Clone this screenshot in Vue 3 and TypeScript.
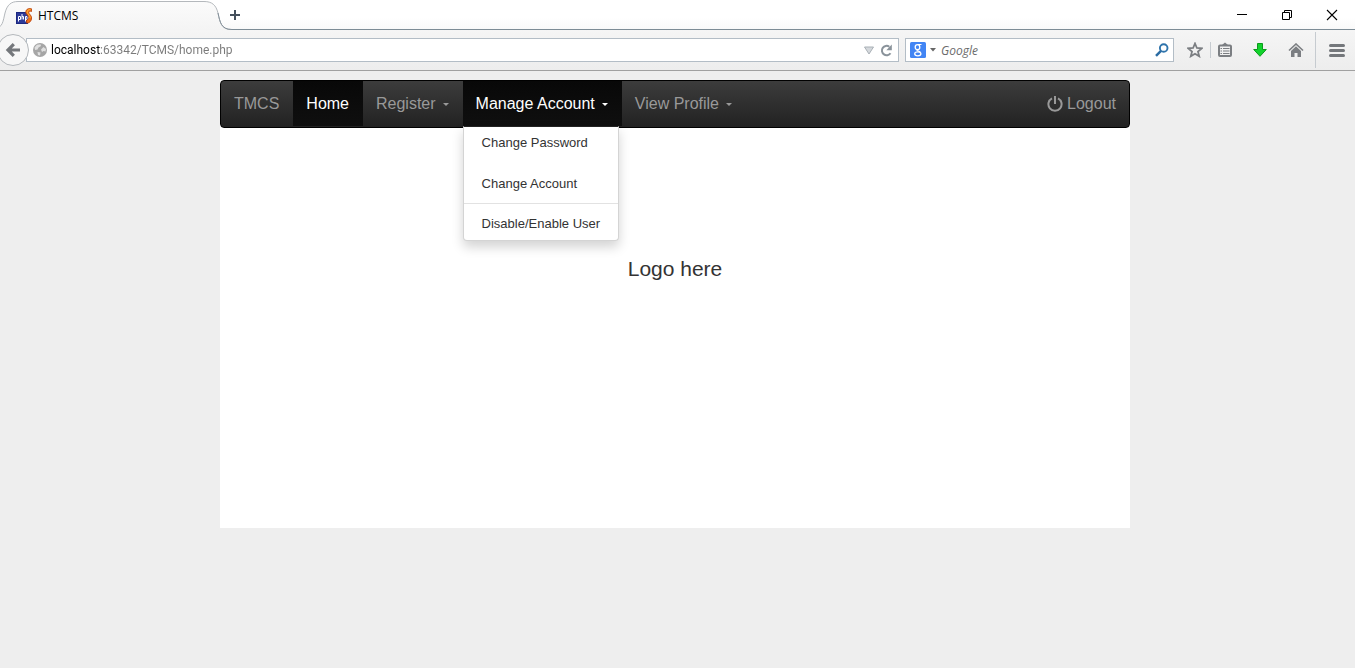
<script setup lang="ts">
import { ref } from 'vue'

interface MenuEntry {
  label: string
  divided?: boolean
}
interface NavItem {
  label: string
  menu?: MenuEntry[]
}

const address = ref('localhost:63342/TCMS/home.php')
const query = ref('')
const openMenu = ref('Manage Account')

const navItems: NavItem[] = [
  { label: 'Home' },
  { label: 'Register', menu: [] },
  {
    label: 'Manage Account',
    menu: [
      { label: 'Change Password' },
      { label: 'Change Account' },
      { label: 'Disable/Enable User', divided: true },
    ],
  },
  { label: 'View Profile', menu: [] },
]

function toggle(item: NavItem) {
  if (item.menu) openMenu.value = openMenu.value === item.label ? '' : item.label
}
</script>

<template>
  <div class="browser">
    <header class="tabstrip">
      <div class="tab">
        <svg class="tab-shape" width="232" height="30" viewBox="0 0 232 30" aria-hidden="true">
          <defs>
            <linearGradient id="tabFill" x1="0" y1="0" x2="0" y2="1">
              <stop offset="0" stop-color="#fbfbfb" />
              <stop offset="1" stop-color="#f4f4f4" />
            </linearGradient>
          </defs>
          <path d="M-6 30C3 29 3 21 5 13C7 5 11 1.500 18 1.500H204C212 1.500 216 5 218 13C220 22 221 29.500 231 29.500V30Z" fill="url(#tabFill)" />
          <path d="M-6 29C3 28 3 21 5 13C7 5 11 1.500 18 1.500H204C212 1.500 216 5 218 13C220 22 221 29.500 231 29.500" fill="none" stroke="#b4b8bc" />
          <path d="M218 13C220 22 221 29.500 232 29.500" fill="none" stroke="#83909a" />
        </svg>
        <svg class="favicon" width="16" height="16" viewBox="0 0 16 16" aria-hidden="true">
          <rect x="0.500" y="4.500" width="11" height="11" fill="#2c3a98" stroke="#1c2880" />
          <path d="M2.500 13.500V8.500H4.500V11.500H2.500M6 6V11.500M6 8.500H7.500V11.500M9.500 13.500V8.500H11V11.500H9.500" fill="none" stroke="#fff" />
          <path d="M15.500 0.800C12 0 9.500 1.800 9.800 4.500C10 6.500 12.700 7.500 12.700 9.500C12.700 11 12 12 10.500 12V15C13.500 15.300 15.600 13 15.600 10C15.600 7 12.800 6.300 12.800 4.500C12.800 3.300 14 3 15.500 3.500Z" fill="#f07018" stroke="#b83c08" stroke-width="0.800" />
          <path d="M14.500 1.600C12.300 1.500 11 2.600 11.200 4.300C11.400 6 14.200 7.500 14.200 10" fill="none" stroke="#ffc23d" stroke-width="0.900" />
        </svg>
        <span>HTCMS</span>
      </div>
      <button class="plain new-tab" aria-label="New tab">
        <svg width="12" height="12" viewBox="0 0 12 12"><path d="M6 1V11M1 6H11" stroke="#45505c" stroke-width="2" /></svg>
      </button>
      <div class="window-controls">
        <button class="plain" aria-label="Minimize">
          <svg width="12" height="12" viewBox="0 0 12 12"><path d="M1 5.500H11" stroke="#000" /></svg>
        </button>
        <button class="plain" aria-label="Restore">
          <svg width="12" height="12" viewBox="0 0 12 12"><path d="M1.500 3.500H8.500V10.500H1.500ZM3.500 3V1.500H10.500V8.500H9" fill="none" stroke="#000" /></svg>
        </button>
        <button class="plain close" aria-label="Close">
          <svg width="12" height="12" viewBox="0 0 12 12"><path d="M1 1L11 11M11 1L1 11" stroke="#000" stroke-width="1.100" /></svg>
        </button>
      </div>
    </header>

    <div class="toolbar">
      <button class="back" aria-label="Back">
        <svg width="16" height="16" viewBox="0 0 16 16"><path d="M8.800 2.200L3 8L8.800 13.800M3.500 8H15" fill="none" stroke="#74777b" stroke-width="3.200" /></svg>
      </button>
      <div class="field url">
        <svg width="14" height="14" viewBox="0 0 14 14" aria-hidden="true">
          <circle cx="7" cy="7" r="7" fill="#a6a6a6" />
          <path d="M1.500 4.500L4 1.800L7.500 1.200L8 3L5.500 4.500L4.500 6.500L2 7ZM8 6.500L10.500 4L13 6L12.500 8.500L10.500 8L9 9ZM4.500 9L7.500 9.500L7 12.500L5 12Z" fill="#e0e0e0" />
        </svg>
        <input v-model="address" class="address" type="text" aria-label="Address" spellcheck="false" />
        <button class="plain" aria-label="Show history">
          <svg width="10" height="9" viewBox="0 0 10 9"><path d="M0.500 1H9.500L5 8Z" fill="#d4d8dc" stroke="#a9b0b6" /></svg>
        </button>
        <button class="plain" aria-label="Reload">
          <svg width="13" height="13" viewBox="0 0 13 13"><path d="M10.500 9.200A4.700 4.700 0 1 1 9.300 2.700" fill="none" stroke="#8a939b" stroke-width="2" /><path d="M11.800 0.500V6.200H6.300Z" fill="#8a939b" /></svg>
        </button>
      </div>
      <div class="field search">
        <button class="plain engine" aria-label="Choose search engine">
          <svg width="16" height="16" viewBox="0 0 16 16">
            <rect width="16" height="16" rx="1.500" fill="#4285f4" />
            <ellipse cx="7.500" cy="5.200" rx="2.300" ry="2.500" fill="none" stroke="#fff" stroke-width="1.300" />
            <ellipse cx="7.800" cy="11.800" rx="3.100" ry="2" fill="none" stroke="#fff" stroke-width="1.300" />
            <path d="M8 2.500H11.500M7 7.700C6.500 9 9.500 8.800 10.500 10.500" fill="none" stroke="#fff" stroke-width="1.200" />
          </svg>
          <svg width="6" height="4" viewBox="0 0 6 4"><path d="M0 0H6L3 3.500Z" fill="#666" /></svg>
        </button>
        <input v-model="query" type="text" aria-label="Search" placeholder="Google" />
        <button class="plain" aria-label="Go">
          <svg width="14" height="14" viewBox="0 0 14 14"><circle cx="8.700" cy="5" r="3.800" fill="none" stroke="#2f74ac" stroke-width="1.900" /><path d="M6 7.800L1 12.800" stroke="#2b6ca3" stroke-width="2.500" /></svg>
        </button>
      </div>
      <div class="actions">
        <button class="plain star" aria-label="Bookmark this page">
          <svg width="16" height="16" viewBox="0 0 16 16"><path d="M8 1.500L9.900 6L14.700 6.400L11 9.600L12.200 14.300L8 11.800L3.800 14.300L5 9.600L1.300 6.400L6.100 6Z" fill="none" stroke="#7b7e82" stroke-width="1.800" /></svg>
        </button>
        <span class="rule short"></span>
        <button class="plain list" aria-label="Show bookmarks">
          <svg width="14" height="16" viewBox="0 0 14 16"><path d="M4 3L7 0.500L10 3Z" fill="#7b7e82" /><rect x="1" y="3.500" width="12" height="10.500" rx="1" fill="#f1f1f1" stroke="#7b7e82" stroke-width="2" /><path d="M2.500 6.500H4M5 6.500H11.500M2.500 9H4M5 9H11.500M2.500 11.500H4M5 11.500H11.500" stroke="#7b7e82" stroke-width="1.100" /></svg>
        </button>
        <button class="plain down" aria-label="Downloads">
          <svg width="14" height="14" viewBox="0 0 14 14"><path d="M4.500 0.500H9.500V6.500H13.300L7 13.300L0.700 6.500H4.500Z" fill="#12d32c" stroke="#0b9a1c" /></svg>
        </button>
        <button class="plain home" aria-label="Home page">
          <svg width="16" height="14" viewBox="0 0 16 14"><path d="M1 7.500L8 1L15 7.500" fill="none" stroke="#7b7e82" stroke-width="1.600" /><path d="M3 8L8 3.300L13 8V14H9.500V10H6.500V14H3Z" fill="#7b7e82" /></svg>
        </button>
        <span class="rule"></span>
        <button class="plain menu-button" aria-label="Open menu">
          <svg width="16" height="13" viewBox="0 0 16 13"><path d="M1.500 1.500H14.500M1.500 6.500H14.500M1.500 11.500H14.500" stroke="#74777b" stroke-width="3" stroke-linecap="round" /></svg>
        </button>
      </div>
    </div>

    <div class="viewport">
      <div class="container">
        <nav class="navbar">
          <a class="nav-link" href="#">TMCS</a>
          <ul class="nav-list">
            <li v-for="item in navItems" :key="item.label" class="nav-item">
              <a
                class="nav-link"
                :class="{ active: item.label === 'Home' || item.label === openMenu }"
                href="#"
                @click.prevent="toggle(item)"
              >{{ item.label }}<span v-if="item.menu" class="caret"></span></a>
              <ul v-if="item.menu && item.menu.length && openMenu === item.label" class="dropdown">
                <li v-for="entry in item.menu" :key="entry.label" :class="{ divided: entry.divided }">
                  <a href="#">{{ entry.label }}</a>
                </li>
              </ul>
            </li>
          </ul>
          <a class="nav-link logout" href="#">
            <svg width="16" height="16" viewBox="0 0 16 16" aria-hidden="true"><path d="M5 2.300A6.600 6.600 0 1 0 11 2.300M8 0V8" fill="none" stroke="#999" stroke-width="2" /></svg>
            Logout
          </a>
        </nav>
        <main class="content"><p>Logo here</p></main>
      </div>
    </div>
  </div>
</template>

<style>
body {
  background: #eee;
}
</style>

<style scoped>
.browser {
  font-family: "Open Sans", "Noto Sans", sans-serif;
  font-size: 12px;
  overflow-x: clip;
}
.plain {
  display: flex;
  align-items: center;
  justify-content: center;
  padding: 0;
  border: 0;
  background: none;
}
svg {
  display: block;
  flex: none;
}
.tabstrip {
  display: flex;
  height: 30px;
  box-sizing: border-box;
  border-bottom: 1px solid #7d8c96;
  background: linear-gradient(#fff 60%, #f9f9f9);
}
.tab {
  position: relative;
  display: flex;
  align-items: center;
  gap: 6px;
  width: 226px;
  height: 30px;
  padding: 1px 0 0 16px;
  box-sizing: border-box;
  color: #000;
}
.tab-shape {
  position: absolute;
  left: 0;
  top: 0;
}
.favicon,
.tab span {
  position: relative;
}
.new-tab {
  width: 18px;
  height: 30px;
}
.window-controls {
  display: flex;
  margin-left: auto;
}
.window-controls button {
  width: 45px;
  height: 29px;
}
.window-controls .close {
  width: 46px;
}
.toolbar {
  display: flex;
  align-items: center;
  height: 41px;
  box-sizing: border-box;
  border-bottom: 1px solid #a0a0a0;
  background: linear-gradient(#f5f5f5, #ededed);
}
.back {
  position: relative;
  z-index: 1;
  display: flex;
  align-items: center;
  justify-content: center;
  flex: none;
  width: 32px;
  height: 32px;
  margin-left: -3px;
  padding: 0;
  border: 1px solid #b4b8bc;
  border-radius: 50%;
  background: #f7f7f7;
}
.field {
  display: flex;
  align-items: center;
  height: 24px;
  box-sizing: border-box;
  border: 1px solid #b3bdc6;
  background: #fff;
}
.field input {
  flex: 1;
  min-width: 0;
  height: 22px;
  padding: 0;
  border: 0;
  outline: 0;
  background: none;
  font: inherit;
}
.url {
  flex: 1;
  gap: 4px;
  margin-left: -3px;
  padding: 0 5px 0 6px;
}
.url button:last-child {
  margin-left: 2px;
}
.field .address {
  background: linear-gradient(to right, #000 49px, #7a7a7a 49px);
  -webkit-background-clip: text;
  background-clip: text;
  color: transparent;
  font-family: Roboto, "Open Sans", sans-serif;
}
.search {
  width: 269px;
  margin-left: 6px;
  padding: 0 4px;
}
.engine {
  gap: 4px;
  margin-right: 5px;
}
.search input::placeholder {
  color: #6b6b6b;
  font-style: italic;
  opacity: 1;
}
.actions {
  display: flex;
  align-items: center;
  margin-left: 5px;
}
.actions button {
  height: 32px;
}
.star {
  width: 31px;
}
.list {
  width: 28px;
}
.down {
  width: 41px;
}
.home {
  width: 35px;
  padding-right: 3px;
}
.menu-button {
  width: 39px;
  padding-left: 3px;
}
.rule {
  width: 1px;
  height: 36px;
  background: #c6cbd0;
}
.short {
  height: 16px;
}
.viewport {
  padding: 9px 5px 20px 0;
  font-family: "Liberation Sans", Arial, sans-serif;
}
.container {
  max-width: 910px;
  margin: 0 auto;
  background: #fff;
}
.navbar {
  display: flex;
  height: 48px;
  box-sizing: border-box;
  border: 1px solid #000;
  border-radius: 4px;
  background: linear-gradient(#3c3c3c, #222);
}
.nav-list {
  display: flex;
  margin: 0;
  padding: 0;
  list-style: none;
}
.nav-item {
  position: relative;
}
.nav-link {
  display: flex;
  align-items: center;
  height: 45px;
  padding: 0 14px 0 13px;
  color: #999;
  font-size: 16px;
  line-height: 20px;
  text-decoration: none;
  white-space: nowrap;
}
.nav-link.active {
  background: linear-gradient(#080808, #0f0f0f);
  color: #fff;
}
.caret {
  margin: 2px 0 0 7px;
  border: 3px solid transparent;
  border-top-color: currentColor;
  border-bottom: 0;
}
.logout {
  gap: 4px;
  height: 46px;
  margin-left: auto;
  padding-right: 13px;
}
.dropdown {
  position: absolute;
  top: 45px;
  left: 0;
  z-index: 2;
  margin: 0;
  padding: 0;
  border: 1px solid #d4d4d4;
  border-top-color: #222;
  border-radius: 0 0 4px 4px;
  background: #fff;
  box-shadow: 0 6px 12px rgba(0, 0, 0, 0.175);
  list-style: none;
}
.dropdown a {
  display: block;
  padding: 6px 18px 15px;
  color: #333;
  font-size: 13px;
  line-height: 20px;
  text-decoration: none;
  white-space: nowrap;
}
.dropdown li:nth-child(2) a {
  padding-bottom: 9px;
}
.dropdown .divided {
  border-top: 1px solid #e2e2e2;
}
.dropdown .divided a {
  padding: 10px 18px 6px;
}
.content {
  min-height: 400px;
  padding-top: 126px;
  box-sizing: border-box;
  color: #333;
  font-size: 21px;
  line-height: 30px;
  text-align: center;
}
.content p {
  margin: 0;
}
</style>
